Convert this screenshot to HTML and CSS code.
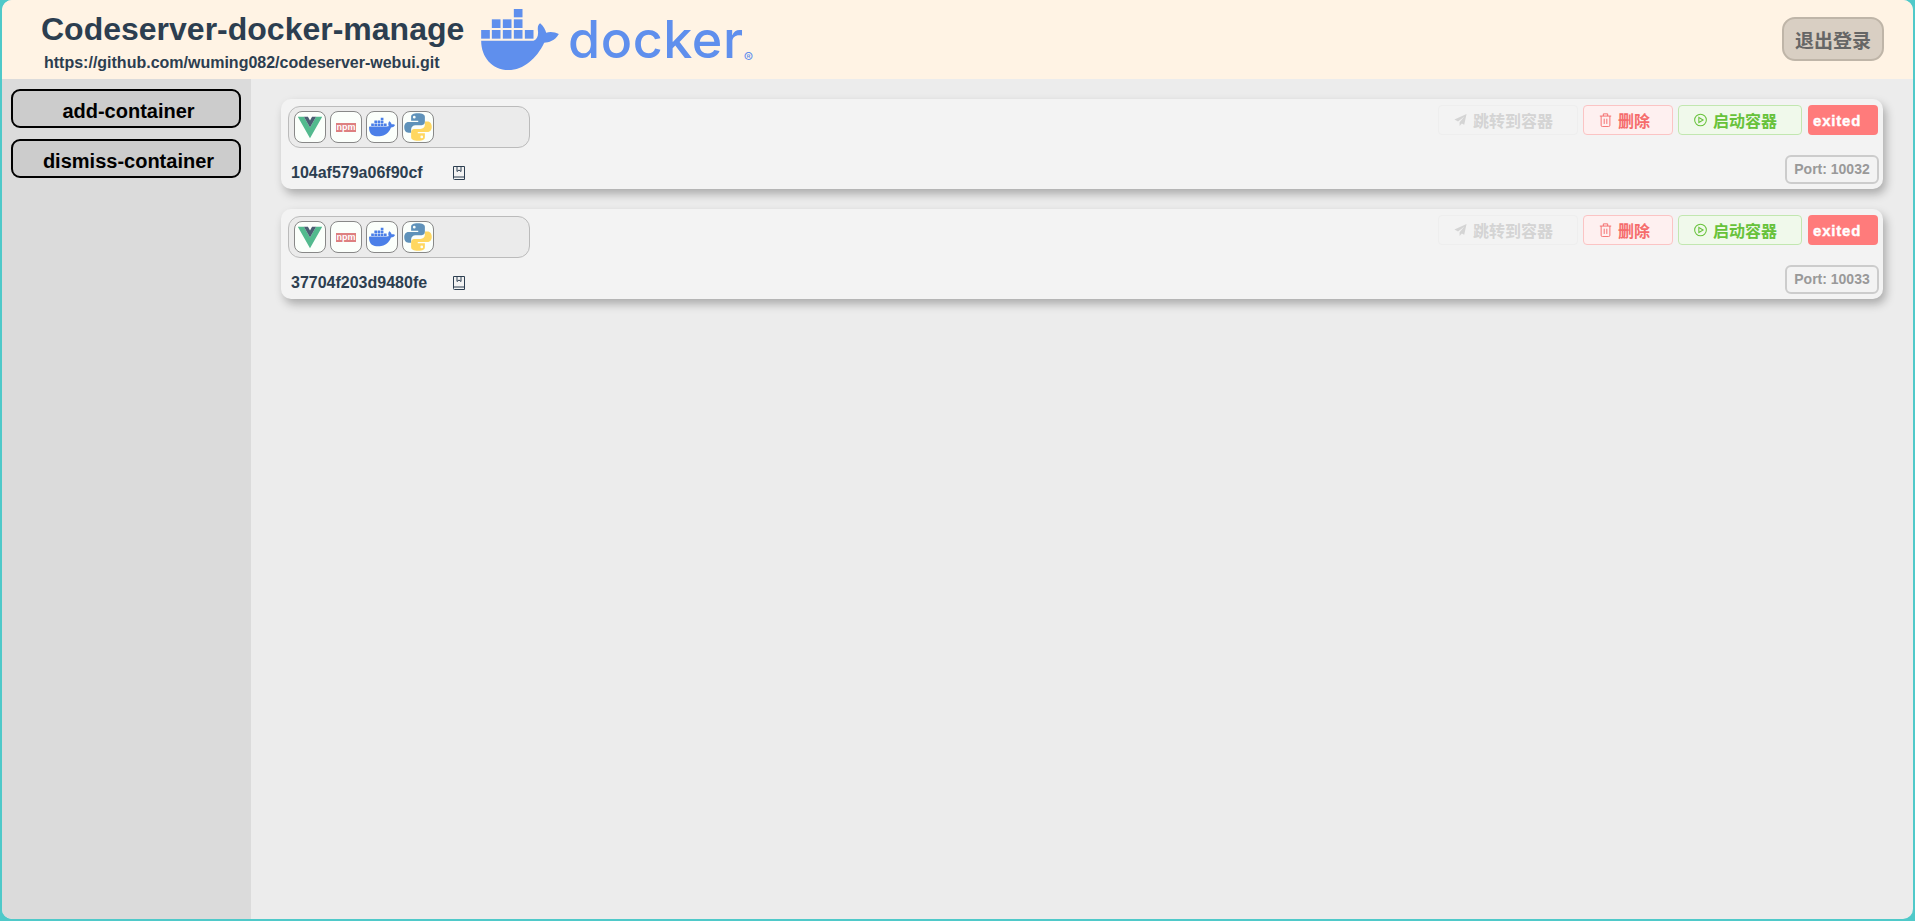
FILE: index.html

```html
<!DOCTYPE html>
<html lang="zh">

<head>
    <meta charset="UTF-8">
    <meta name="viewport" content="width=device-width, initial-scale=1.0">
    <title>Codeserver-docker-manage</title>
    <link rel="stylesheet" href="styles.css">
</head>

<body>
    <!-- shared icons -->
    <svg class="defs" width="0" height="0">
        <symbol id="i-vue" viewBox="0 0 32 32">
            <path fill="#52ba8e" d="M3 5h6.5L16 16.5 22.500 5H29L16 28z" />
            <path fill="#4a5d73" d="M9.500 5h4.300L16 9l2.200-4h4.300L16 16.500z" />
        </symbol>
        <symbol id="i-docker" viewBox="0 0 24 24">
            <path fill="#4a7fe8" d="M13.983 11.078h2.119a.186.186 0 00.186-.185V9.006a.186.186 0 00-.186-.186h-2.119a.185.185 0 00-.185.185v1.888c0 .102.083.185.185.185m-2.954-5.43h2.118a.186.186 0 00.186-.186V3.574a.186.186 0 00-.186-.185h-2.118a.185.185 0 00-.185.185v1.888c0 .102.082.185.185.185m0 2.716h2.118a.187.187 0 00.186-.186V6.29a.186.186 0 00-.186-.185h-2.118a.185.185 0 00-.185.185v1.887c0 .102.082.185.185.186m-2.93 0h2.12a.186.186 0 00.184-.186V6.29a.185.185 0 00-.185-.185H8.1a.185.185 0 00-.185.185v1.887c0 .102.083.185.185.186m-2.964 0h2.119a.186.186 0 00.185-.186V6.29a.185.185 0 00-.185-.185H5.136a.186.186 0 00-.186.185v1.887c0 .102.084.185.186.186m5.893 2.715h2.118a.186.186 0 00.186-.185V9.006a.186.186 0 00-.186-.186h-2.118a.185.185 0 00-.185.185v1.888c0 .102.082.185.185.185m-2.93 0h2.12a.185.185 0 00.184-.185V9.006a.185.185 0 00-.184-.186h-2.12a.185.185 0 00-.184.185v1.888c0 .102.083.185.185.185m-2.964 0h2.119a.185.185 0 00.185-.185V9.006a.185.185 0 00-.184-.186h-2.12a.186.186 0 00-.186.186v1.887c0 .102.084.185.186.185m-2.92 0h2.12a.185.185 0 00.184-.185V9.006a.185.185 0 00-.184-.186h-2.12a.185.185 0 00-.184.185v1.888c0 .102.082.185.185.185M23.763 9.89c-.065-.051-.672-.51-1.954-.51-.338.001-.676.03-1.01.087-.248-1.7-1.653-2.53-1.716-2.566l-.344-.199-.226.327c-.284.438-.49.922-.612 1.43-.23.97-.09 1.882.403 2.661-.595.332-1.55.413-1.744.42H.751a.751.751 0 00-.75.748 11.376 11.376 0 00.692 4.062c.545 1.428 1.355 2.48 2.41 3.124 1.18.723 3.1 1.137 5.275 1.137.983.003 1.963-.086 2.93-.266a12.248 12.248 0 003.823-1.389c.98-.567 1.86-1.288 2.61-2.136 1.252-1.418 1.998-2.997 2.553-4.4h.221c1.372 0 2.215-.549 2.68-1.009.309-.293.55-.65.707-1.046l.098-.288Z" />
        </symbol>
        <symbol id="i-python" viewBox="0 0 24 24">
            <path fill="#5f92ba" fill-rule="evenodd" d="M12 1C8 1 6.500 2 6.500 4v3h5.700v1H4.500C2 8 1 10 1 12.200c0 2.300 1 4.300 3.500 4.300h2v-2.700c0-2 1.500-3.300 3.500-3.300h5c1.500 0 2.500-1.200 2.500-2.500V4C17.500 2 15.500 1 12 1zM9 3a1.100 1.100 0 110 2.200A1.100 1.100 0 019 3z" />
            <path fill="#ffd760" fill-rule="evenodd" transform="rotate(180 12 12)" d="M12 1C8 1 6.500 2 6.500 4v3h5.700v1H4.500C2 8 1 10 1 12.200c0 2.300 1 4.300 3.500 4.300h2v-2.700c0-2 1.500-3.300 3.500-3.300h5c1.500 0 2.500-1.200 2.500-2.500V4C17.500 2 15.500 1 12 1zM9 3a1.100 1.100 0 110 2.200A1.100 1.100 0 019 3z" />
        </symbol>
        <symbol id="i-book" viewBox="0 0 12 14">
            <path fill="none" stroke="#2c3e50" stroke-width="1" d="M.5 12V.5h11v13h-10a1 1 0 01-1-1.500zM.8 11h10.700M4 .5v5l2-1.500 2 1.500v-5" />
        </symbol>
        <symbol id="i-send" viewBox="0 0 14 14">
            <path fill="currentColor" d="M13.500.500L.500 6.500l3.800 2L11 3.500 6 9.500V13.500l2.400-2.800 2.600 1.300z" />
        </symbol>
        <symbol id="i-trash" viewBox="0 0 14 16">
            <path fill="none" stroke="currentColor" stroke-width="1.100" d="M.5 3.500h13M2 3.500v10.500a1.500 1.500 0 001.500 1.500h7A1.500 1.500 0 0012 14V3.500M4.500 3.500V1h5v2.500M5.500 6.500v6M8.500 6.500v6" />
        </symbol>
        <symbol id="i-play" viewBox="0 0 14 14">
            <circle cx="7" cy="7" r="6.300" fill="none" stroke="currentColor" stroke-width="1.100" />
            <path fill="none" stroke="currentColor" stroke-width="1.100" d="M5.200 4.300v5.400L9.800 7z" />
        </symbol>
    </svg>

    <div class="app">
        <!-- top bar -->
        <header class="topbar">
            <div class="brand">
                <h1>Codeserver-docker-manage</h1>
                <a class="repo" href="#">https://github.com/wuming082/codeserver-webui.git</a>
            </div>
            <div class="logo">
                <svg class="whale" viewBox="33 27 233 183" width="78" height="61">
                    <g fill="#5f8fed">
                        <rect x="131" y="27" width="26" height="25" />
                        <rect x="65" y="58" width="26" height="26" />
                        <rect x="98" y="58" width="26" height="26" />
                        <rect x="131" y="58" width="26" height="26" />
                        <rect x="33" y="90" width="26" height="26" />
                        <rect x="65" y="90" width="26" height="26" />
                        <rect x="98" y="90" width="26" height="26" />
                        <rect x="131" y="90" width="26" height="26" />
                        <rect x="164" y="90" width="26" height="26" />
                        <path d="M33 122H190C200 118 206 108 203 90C202 80 205 72 210 70C220 78 226 90 228 98C240 94 255 96 266 102C255 122 235 128 222 128C200 175 160 210 115 210C65 210 33 170 33 122Z" />
                    </g>
                </svg>
                <span class="wordmark">docker</span>
                <span class="reg">®</span>
            </div>
            <button class="logout">退出登录</button>
        </header>

        <div class="body-row">
            <!-- left menu -->
            <aside class="sidebar">
                <button class="side-btn">add-container</button>
                <button class="side-btn">dismiss-container</button>
            </aside>

            <!-- container list -->
            <main class="list">
                <section class="card">
                    <div class="card-top">
                        <div class="tags">
                            <span class="tag"><svg><use href="#i-vue" /></svg></span>
                            <span class="tag"><span class="npm">npm</span></span>
                            <span class="tag"><svg class="docker"><use href="#i-docker" /></svg></span>
                            <span class="tag"><svg><use href="#i-python" /></svg></span>
                        </div>
                        <div class="actions">
                            <button class="act act-jump"><svg><use href="#i-send" /></svg>跳转到容器</button>
                            <button class="act act-del"><svg><use href="#i-trash" /></svg>删除</button>
                            <button class="act act-start"><svg><use href="#i-play" /></svg>启动容器</button>
                            <span class="status">exited</span>
                        </div>
                    </div>
                    <div class="card-bottom">
                        <div class="cid"><span class="cid-text">104af579a06f90cf</span><svg class="book"><use href="#i-book" /></svg></div>
                        <span class="port">Port: 10032</span>
                    </div>
                </section>

                <section class="card">
                    <div class="card-top">
                        <div class="tags">
                            <span class="tag"><svg><use href="#i-vue" /></svg></span>
                            <span class="tag"><span class="npm">npm</span></span>
                            <span class="tag"><svg class="docker"><use href="#i-docker" /></svg></span>
                            <span class="tag"><svg><use href="#i-python" /></svg></span>
                        </div>
                        <div class="actions">
                            <button class="act act-jump"><svg><use href="#i-send" /></svg>跳转到容器</button>
                            <button class="act act-del"><svg><use href="#i-trash" /></svg>删除</button>
                            <button class="act act-start"><svg><use href="#i-play" /></svg>启动容器</button>
                            <span class="status">exited</span>
                        </div>
                    </div>
                    <div class="card-bottom">
                        <div class="cid"><span class="cid-text">37704f203d9480fe</span><svg class="book"><use href="#i-book" /></svg></div>
                        <span class="port">Port: 10033</span>
                    </div>
                </section>
            </main>
        </div>
    </div>
</body>

</html>
```

FILE: styles.css

```css
/* General */

html,
body {
    margin: 0;
    padding: 0;
    height: 100%;
    overflow: hidden;
}

body {
    font-family: "Liberation Sans", "Noto Sans CJK SC", sans-serif;
    background-color: #4fc9c9;
    padding: 0 2px 2px;
    box-sizing: border-box;
}

.defs {
    position: absolute;
}

button {
    font-family: inherit;
}

.app {
    height: 100%;
    display: flex;
    flex-direction: column;
    border-radius: 10px;
    overflow: hidden;
    background-color: #ececec;
}

/* Top bar */

.topbar {
    display: flex;
    align-items: flex-start;
    height: 79px;
    flex-shrink: 0;
    background-color: #fff3e4;
}

.brand {
    width: 428px;
    padding-left: 39px;
    color: #2c3e50;
}

.brand h1 {
    margin: 11px 0 0;
    font-size: 32px;
    line-height: 36px;
    font-weight: bold;
    white-space: nowrap;
}

.repo {
    display: block;
    margin: 7px 0 0 3px;
    font-size: 16px;
    line-height: 18px;
    font-weight: bold;
    color: #2c3e50;
    text-decoration: none;
    white-space: nowrap;
}

.logo {
    display: flex;
    align-items: flex-start;
    margin-left: 12px;
    padding-top: 9px;
    color: #5f8fed;
}

.wordmark {
    margin: -3px 0 0 9px;
    font-family: "Inter", sans-serif;
    font-size: 52px;
    line-height: 68px;
    font-weight: 500;
    letter-spacing: 0.6px;
}

.reg {
    margin: 42px 0 0 0;
    font-family: "Inter", sans-serif;
    font-size: 14px;
    line-height: 14px;
}

.logout {
    margin: 17px 29px 0 auto;
    width: 102px;
    height: 44px;
    font-size: 19px;
    font-weight: bold;
    color: #666;
    background-color: #d9cfc3;
    border: 2px solid #bfb5a8;
    border-radius: 13px;
    padding: 0;
}

/* Main area */

.body-row {
    flex: 1;
    display: flex;
    min-height: 0;
}

.sidebar {
    width: 249px;
    flex-shrink: 0;
    box-sizing: border-box;
    padding: 10px 10px 0 9px;
    display: flex;
    flex-direction: column;
    gap: 11px;
    background-color: #dbdbdb;
}

.side-btn {
    height: 39px;
    font-size: 20px;
    font-weight: bold;
    color: #000;
    background-color: #ccc;
    border: 2px solid #000;
    border-radius: 9px;
    padding: 5px 0 0 5px;
}

.list {
    flex: 1;
    min-width: 0;
    padding: 20px 30px 0;
    display: flex;
    flex-direction: column;
    gap: 20px;
}

/* Container card */

.card {
    box-sizing: border-box;
    height: 90px;
    padding: 6px 5px 5px 7px;
    background-color: #f3f3f3;
    border-radius: 10px;
    box-shadow: 3px 5px 10px rgba(0, 0, 0, 0.28);
}

.card-top {
    display: flex;
    justify-content: space-between;
    align-items: flex-start;
}

.tags {
    box-sizing: border-box;
    width: 242px;
    height: 42px;
    margin-top: 1px;
    padding: 4px 5px;
    display: flex;
    gap: 4px;
    background-color: #ebebeb;
    border: 1px solid #bbb;
    border-radius: 12px;
}

.tag {
    box-sizing: border-box;
    width: 32px;
    height: 32px;
    display: flex;
    align-items: center;
    justify-content: center;
    background-color: #fbfffb;
    border: 1px solid #888;
    border-radius: 8px;
}

.tag svg {
    width: 30px;
    height: 30px;
}

.tag svg.docker {
    width: 26px;
    height: 26px;
}

.npm {
    width: 20px;
    height: 9px;
    line-height: 8px;
    text-align: center;
    font-size: 9px;
    font-weight: bold;
    color: #fff;
    background-color: #dd8080;
}

.actions {
    display: flex;
    gap: 5px;
}

.act {
    box-sizing: border-box;
    height: 30px;
    padding: 0 0 0 15px;
    display: flex;
    align-items: center;
    justify-content: flex-start;
    gap: 6px;
    font-size: 16px;
    font-weight: bold;
    border-radius: 4px;
    border: 1px solid;
}

.act svg {
    width: 13px;
    height: 14px;
}

.act-jump {
    width: 140px;
    color: #d4d4d4;
    background-color: #f3f3f3;
    border-color: #eeeeee;
}

.act-del {
    width: 90px;
    color: #f56c6c;
    background-color: #fef0f0;
    border-color: #fbc4c4;
}

.act-start {
    width: 124px;
    color: #67c23a;
    background-color: #f0f9eb;
    border-color: #c2e7b0;
}

.status {
    box-sizing: border-box;
    width: 70px;
    height: 30px;
    margin-left: 1px;
    padding-left: 5px;
    line-height: 32px;
    font-size: 15px;
    font-weight: bold;
    letter-spacing: 0.8px;
    -webkit-text-stroke: 0.4px #fff;
    color: #fff;
    background-color: #ff7b7b;
    border-radius: 4px;
}

.card-bottom {
    display: flex;
    justify-content: space-between;
    align-items: flex-start;
    margin-top: 7px;
    height: 29px;
}

.cid {
    display: flex;
    align-items: center;
    height: 36px;
    padding-left: 3px;
    font-size: 16px;
    font-weight: bold;
    color: #2c3e50;
}

.cid-text {
    width: 162px;
}

.book {
    width: 12px;
    height: 14px;
}

.port {
    box-sizing: border-box;
    width: 94px;
    height: 29px;
    margin-right: -1px;
    line-height: 25px;
    text-align: center;
    font-size: 14px;
    font-weight: bold;
    color: #999;
    border: 2px solid #ccc;
    border-radius: 6px;
}
```
